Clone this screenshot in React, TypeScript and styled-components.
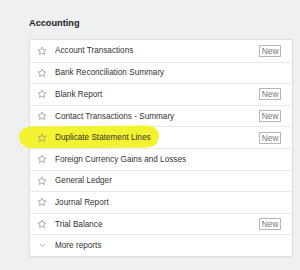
import styled, { createGlobalStyle } from 'styled-components';

const GlobalStyle = createGlobalStyle`
  body {
    margin: 0;
    background: #eef0f2;
    font-family: "Liberation Sans", Arial, sans-serif;
  }
`;

const Page = styled.div`
  width: 300px;
  height: 270px;
  box-sizing: border-box;
  padding: 18px 7px 0 29px;
`;

const Title = styled.h2`
  margin: 0 0 10px 0;
  font-size: 9.2px;
  line-height: 11px;
  font-weight: bold;
  color: #222;
`;

const Card = styled.ul`
  list-style: none;
  margin: 0;
  padding: 0;
  background: #fff;
  border: 1px solid #dcdfe2;
  border-radius: 2px;
  box-shadow: 0 1px 1px rgba(0, 0, 0, 0.04);
`;

const Row = styled.li`
  position: relative;
  display: flex;
  align-items: center;
  height: 21.6px;
  padding: 0 11px 0 7px;
  border-top: 1px solid #e6e8ea;
  box-sizing: border-box;

  &:first-child {
    border-top: none;
  }
`;

const IconSlot = styled.span`
  position: relative;
  width: 10px;
  height: 10px;
  margin-right: 8px;
  display: flex;
  align-items: center;
  justify-content: center;
  color: #8a8d90;
`;

const Label = styled.span`
  position: relative;
  flex: 1;
  font-size: 8.2px;
  color: #333;
  white-space: nowrap;
`;

const Badge = styled.span`
  font-size: 8.4px;
  line-height: 10px;
  color: #777;
  border: 1px solid #b3b5b7;
  padding: 0 1.5px;
  background: #fff;
`;

const Highlight = styled.span`
  position: absolute;
  left: -11px;
  top: -1px;
  width: 140px;
  height: 22px;
  background: #f2f230;
  border-radius: 12px 11px 11px 14px / 10px 11px 11px 12px;
  transform: rotate(-0.6deg);
  pointer-events: none;
`;

const Star = () => (
  <svg width="10" height="10" viewBox="0 0 24 24" fill="none" stroke="currentColor" strokeWidth="1.7" strokeLinejoin="round">
    <path d="M12 2.5l2.9 6.2 6.6.7-4.9 4.5 1.4 6.6L12 17.2l-6 3.3 1.4-6.6-4.9-4.5 6.6-.7z" />
  </svg>
);

const Chevron = () => (
  <svg width="7" height="7" viewBox="0 0 24 24" fill="none" stroke="currentColor" strokeWidth="2.6" strokeLinecap="round" strokeLinejoin="round">
    <path d="M5 8.5l7 7 7-7" />
  </svg>
);

const reports = [
  { name: 'Account Transactions', isNew: true },
  { name: 'Bank Reconciliation Summary', isNew: false },
  { name: 'Blank Report', isNew: true },
  { name: 'Contact Transactions - Summary', isNew: true },
  { name: 'Duplicate Statement Lines', isNew: true, marked: true },
  { name: 'Foreign Currency Gains and Losses', isNew: false },
  { name: 'General Ledger', isNew: false },
  { name: 'Journal Report', isNew: false },
  { name: 'Trial Balance', isNew: true },
];

function App() {
  return (
    <>
      <GlobalStyle />
      <Page>
        <Title>Accounting</Title>
        <Card>
          {reports.map((r) => (
            <Row key={r.name}>
              {r.marked && <Highlight />}
              <IconSlot>
                <Star />
              </IconSlot>
              <Label>{r.name}</Label>
              {r.isNew && <Badge>New</Badge>}
            </Row>
          ))}
          <Row>
            <IconSlot>
              <Chevron />
            </IconSlot>
            <Label>More reports</Label>
          </Row>
        </Card>
      </Page>
    </>
  );
}

export default App;
